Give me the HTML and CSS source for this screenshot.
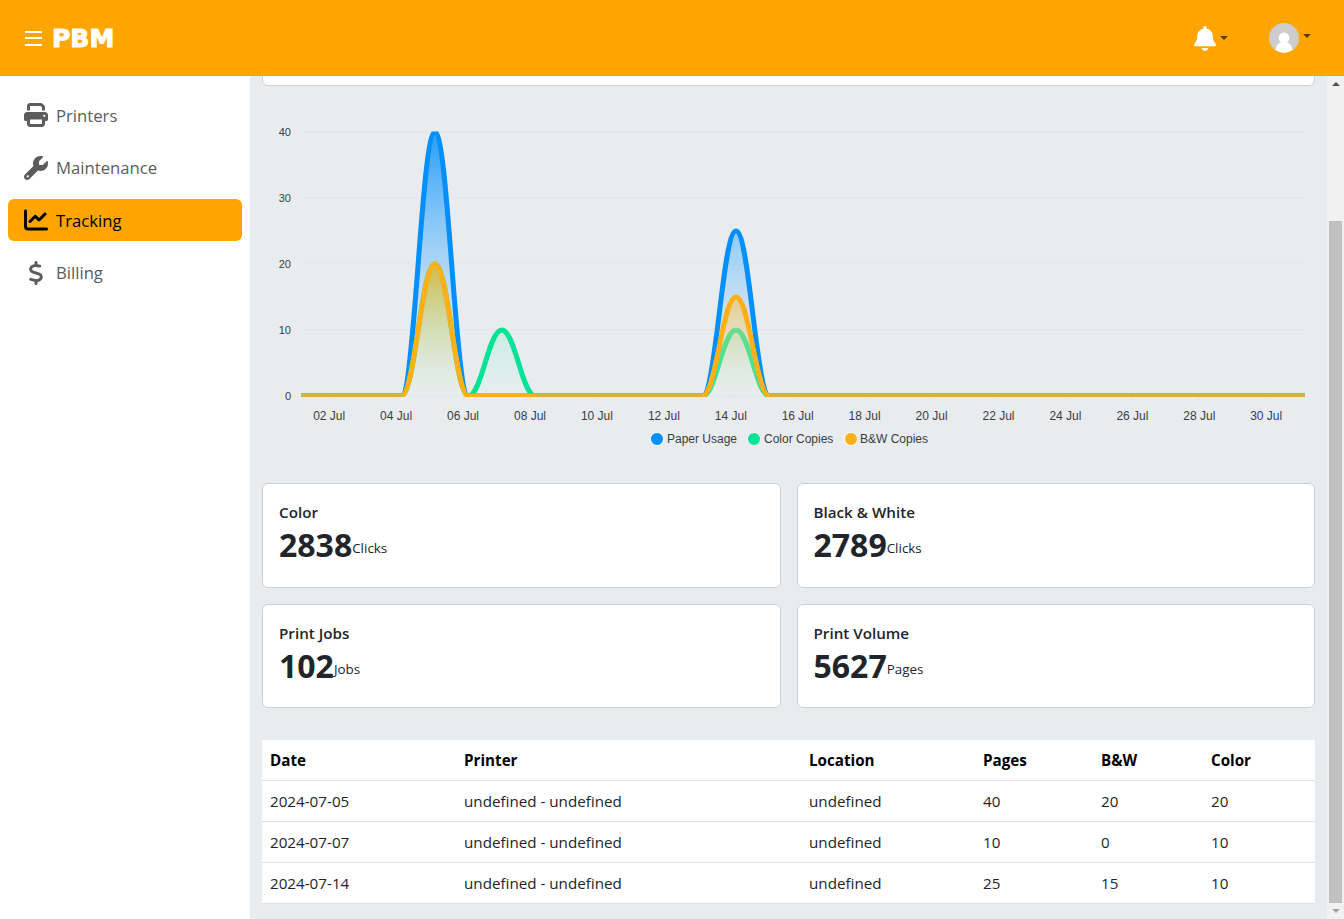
FILE: index.html
```html
<!DOCTYPE html>
<html>
  <head>
    <title>PBM Tracking</title>
    <link rel="stylesheet" href="styles.css">
  </head>
  <body>
    <header class="topbar">
      <div class="burger"><span></span><span></span><span></span></div>
      <div class="logo">PBM</div>
      <div class="bell-menu">
        <svg class="bell" viewBox="0 0 448 512"><path d="M224 0c-17.7 0-32 14.3-32 32V51.2C119 66 64 130.6 64 208v18.8c0 47-17.3 92.4-48.5 127.6l-7.4 8.3c-8.4 9.4-10.4 22.9-5.3 34.4S19.4 416 32 416H416c12.6 0 24-7.4 29.2-18.9s3.1-25-5.3-34.4l-7.4-8.3C401.3 319.2 384 273.9 384 226.8V208c0-77.4-55-142-128-156.8V32c0-17.7-14.3-32-32-32zm45.3 493.3c12-12 18.7-28.3 18.7-45.3H224 160c0 17 6.7 33.3 18.7 45.3s28.3 18.7 45.3 18.7s33.3-6.7 45.3-18.7z"/></svg>
        <span class="caret"></span>
      </div>
      <div class="user-menu">
        <svg class="avatar" viewBox="0 0 30 30">
          <circle cx="15" cy="15" r="15" fill="#cdcdcd"/>
          <circle cx="15" cy="15" r="5.4" fill="#fff"/>
          <path d="M6.5 27c.6-5.600 4-8 8.500-8s7.900 2.400 8.500 8a15 15 0 0 1-17 0z" fill="#fff"/>
        </svg>
        <span class="caret caret-user"></span>
      </div>
    </header>

    <div class="layout">
      <nav class="sidebar">
        <a class="nav-item">
          <svg class="nav-icon" viewBox="0 0 512 512"><path d="M128 0C92.7 0 64 28.7 64 64v96h64V64H354.7L384 93.3V160h64V93.3c0-17-6.7-33.3-18.7-45.3L400 18.7C388 6.7 371.7 0 354.7 0H128zM384 352v32 64H128V384 368 352H384zm64 32h32c17.7 0 32-14.3 32-32V256c0-35.3-28.7-64-64-64H64c-35.3 0-64 28.7-64 64v96c0 17.700 14.300 32 32 32H64v64c0 35.300 28.700 64 64 64H384c35.300 0 64-28.700 64-64V384zM432 248a24 24 0 1 1 0 48 24 24 0 1 1 0-48z"/></svg>
          Printers
        </a>
        <a class="nav-item">
          <svg class="nav-icon" viewBox="0 0 512 512"><path d="M352 320c88.400 0 160-71.600 160-160c0-15.300-2.200-30.100-6.200-44.200c-3.100-10.800-16.400-13.200-24.300-5.300l-76.800 76.800c-3 3-7.100 4.700-11.300 4.700H336c-8.800 0-16-7.200-16-16V118.600c0-4.200 1.700-8.300 4.700-11.300l76.800-76.800c7.900-7.900 5.400-21.200-5.300-24.300C382.100 2.200 367.300 0 352 0C263.600 0 192 71.600 192 160c0 19.100 3.400 37.500 9.500 54.500L19.900 396.100C7.200 408.800 0 426.100 0 444.100C0 481.600 30.400 512 67.900 512c18 0 35.300-7.200 48-19.900L297.500 310.500c17 6.200 35.400 9.500 54.500 9.500zM80 408a24 24 0 1 1 0 48 24 24 0 1 1 0-48z"/></svg>
          Maintenance
        </a>
        <a class="nav-item active">
          <svg class="nav-icon" viewBox="0 0 512 512"><path d="M64 64c0-17.700-14.300-32-32-32S0 46.300 0 64V400c0 44.200 35.800 80 80 80H480c17.700 0 32-14.300 32-32s-14.300-32-32-32H80c-8.800 0-16-7.200-16-16V64zm406.600 86.600c12.500-12.500 12.500-32.800 0-45.300s-32.800-12.500-45.300 0L320 210.700l-57.400-57.400c-12.500-12.500-32.800-12.500-45.300 0l-112 112c-12.500 12.500-12.500 32.800 0 45.300s32.800 12.500 45.300 0L240 221.300l57.400 57.400c12.500 12.500 32.800 12.500 45.300 0l128-128z"/></svg>
          Tracking
        </a>
        <a class="nav-item">
          <svg class="nav-icon" viewBox="0 0 320 512"><path d="M160 0c17.700 0 32 14.300 32 32V67.700c1.600 .2 3.100 .4 4.700 .7c.4 .1 .7 .1 1.100 .2l48 8.800c17.400 3.200 28.900 19.900 25.700 37.200s-19.900 28.900-37.200 25.700l-47.500-8.700c-31.300-4.600-58.900-1.500-78.300 6.200s-27.200 18.300-29 28.100c-2 10.700-.5 16.700 1.200 20.400c1.800 3.900 5.500 8.300 12.800 13.200c16.300 10.700 41.300 17.700 73.700 26.300l2.900 .8c28.600 7.600 63.600 16.800 89.600 33.800c14.200 9.300 27.600 21.900 35.900 39.500c8.500 17.900 10.300 37.900 6.400 59.200c-6.900 38-33.100 63.400-65.600 76.700c-13.700 5.600-28.600 9.200-44.400 11V480c0 17.700-14.300 32-32 32s-32-14.300-32-32V445.100c-.4-.1-.9-.1-1.300-.2l-.2 0 0 0c-24.400-3.800-64.500-14.300-91.500-26.300c-16.100-7.200-23.400-26.100-16.200-42.200s26.100-23.400 42.200-16.200c20.900 9.300 55.300 18.500 75.200 21.600c31.900 4.700 58.200 2 76-5.300c16.900-6.900 24.600-16.900 26.800-28.900c1.900-10.600 .4-16.700-1.300-20.400c-1.900-4-5.600-8.400-13-13.300c-16.400-10.700-41.500-17.700-74-26.300l-2.800-.7 0 0C119.400 279.300 84.400 270 58.400 253c-14.200-9.300-27.500-22-35.800-39.600c-8.400-17.900-10.100-37.900-6.100-59.200C23.700 116 52.300 91.200 84.800 78.300c13.300-5.300 27.900-8.900 43.200-11V32c0-17.700 14.300-32 32-32z"/></svg>
          Billing
        </a>
      </nav>

      <main class="content">
        <div class="card filter-card"></div>

        <svg class="chart" viewBox="262 85 1053 375">
          <defs>
            <linearGradient id="fill-blue" gradientUnits="userSpaceOnUse" x1="0" y1="132" x2="0" y2="396">
              <stop offset="0" stop-color="#008ffb" stop-opacity=".85"/>
              <stop offset="1" stop-color="#cfe9fe" stop-opacity=".1"/>
            </linearGradient>
            <linearGradient id="fill-green" gradientUnits="userSpaceOnUse" x1="0" y1="264" x2="0" y2="396">
              <stop offset="0" stop-color="#00e396" stop-opacity=".45"/>
              <stop offset="1" stop-color="#ccf9ea" stop-opacity=".1"/>
            </linearGradient>
            <linearGradient id="fill-orange" gradientUnits="userSpaceOnUse" x1="0" y1="264" x2="0" y2="396">
              <stop offset="0" stop-color="#feb019" stop-opacity=".75"/>
              <stop offset="1" stop-color="#ffefd1" stop-opacity=".1"/>
            </linearGradient>
            <clipPath id="plot-clip"><rect x="296" y="131.500" width="1012" height="265.500"/></clipPath>
          </defs>

          <g class="grid">
            <path d="M301 132H1305M301 198H1305M301 264H1305M301 330H1305M301 396H1305"/>
            <path d="M329.200 396v6M396.100 396v6M463 396v6M530 396v6M596.900 396v6M663.900 396v6M730.800 396v6M797.700 396v6M864.600 396v6M931.600 396v6M998.500 396v6M1065.400 396v6M1132.400 396v6M1199.300 396v6M1266.200 396v6"/>
          </g>

          <g clip-path="url(#plot-clip)">
            <path fill="url(#fill-blue)" d="M401.400 396C414.800 396 421.500 132 434.900 132C448.300 132 455 396 468.400 396ZM702.500 396C715.900 396 722.600 231 736 231C749.400 231 756.100 396 769.500 396Z"/>
            <path class="line" stroke="#008ffb" d="M301 396H401.400C414.800 396 421.500 132 434.900 132C448.300 132 455 396 468.400 396H702.500C715.900 396 722.600 231 736 231C749.400 231 756.100 396 769.500 396H1305"/>
            <path fill="url(#fill-green)" d="M401.400 396C414.800 396 421.500 264 434.900 264C448.300 264 455 396 468.400 396C481.800 396 488.400 330 501.800 330C515.200 330 521.900 396 535.300 396ZM702.500 396C715.900 396 722.600 330 736 330C749.400 330 756.100 396 769.500 396Z"/>
            <path class="line" stroke="#00e396" d="M301 396H401.400C414.800 396 421.500 264 434.900 264C448.300 264 455 396 468.400 396C481.800 396 488.400 330 501.800 330C515.200 330 521.900 396 535.300 396H702.500C715.900 396 722.600 330 736 330C749.400 330 756.100 396 769.500 396H1305"/>
            <path fill="url(#fill-orange)" d="M401.400 396C414.800 396 421.500 264 434.900 264C448.300 264 455 396 468.400 396ZM702.500 396C715.900 396 722.600 297 736 297C749.400 297 756.100 396 769.500 396Z"/>
            <path class="line" stroke="#feb019" d="M301 396H401.400C414.800 396 421.500 264 434.900 264C448.300 264 455 396 468.400 396H702.500C715.900 396 722.600 297 736 297C749.400 297 756.100 396 769.500 396H1305"/>
            <path class="baseline-tint" d="M301 396H401M535 396H702M770 396H1305"/>
          </g>

          <g class="y-labels">
            <text x="291" y="136">40</text>
            <text x="291" y="202">30</text>
            <text x="291" y="268">20</text>
            <text x="291" y="334">10</text>
            <text x="291" y="400">0</text>
          </g>

          <g class="x-labels">
            <text x="329.200" y="420">02 Jul</text>
            <text x="396.100" y="420">04 Jul</text>
            <text x="463" y="420">06 Jul</text>
            <text x="530" y="420">08 Jul</text>
            <text x="596.900" y="420">10 Jul</text>
            <text x="663.900" y="420">12 Jul</text>
            <text x="730.800" y="420">14 Jul</text>
            <text x="797.700" y="420">16 Jul</text>
            <text x="864.600" y="420">18 Jul</text>
            <text x="931.600" y="420">20 Jul</text>
            <text x="998.500" y="420">22 Jul</text>
            <text x="1065.400" y="420">24 Jul</text>
            <text x="1132.400" y="420">26 Jul</text>
            <text x="1199.300" y="420">28 Jul</text>
            <text x="1266.200" y="420">30 Jul</text>
          </g>

          <g class="legend">
            <circle cx="657" cy="439" r="6.500" fill="#008ffb"/>
            <text x="667" y="443">Paper Usage</text>
            <circle cx="754" cy="439" r="6.500" fill="#00e396"/>
            <text x="764" y="443">Color Copies</text>
            <circle cx="851" cy="439" r="6.500" fill="#feb019"/>
            <text x="860" y="443">B&amp;W Copies</text>
          </g>
        </svg>

        <section class="stats">
          <div class="card stat">
            <div class="stat-title">Color</div>
            <div class="stat-row"><span class="stat-value">2838</span><span class="stat-unit">Clicks</span></div>
          </div>
          <div class="card stat">
            <div class="stat-title">Black &amp; White</div>
            <div class="stat-row"><span class="stat-value">2789</span><span class="stat-unit">Clicks</span></div>
          </div>
          <div class="card stat">
            <div class="stat-title">Print Jobs</div>
            <div class="stat-row"><span class="stat-value">102</span><span class="stat-unit">Jobs</span></div>
          </div>
          <div class="card stat">
            <div class="stat-title">Print Volume</div>
            <div class="stat-row"><span class="stat-value">5627</span><span class="stat-unit">Pages</span></div>
          </div>
        </section>

        <table class="jobs">
          <thead>
            <tr>
              <th class="col-date">Date</th>
              <th class="col-printer">Printer</th>
              <th class="col-location">Location</th>
              <th class="col-pages">Pages</th>
              <th class="col-bw">B&amp;W</th>
              <th>Color</th>
            </tr>
          </thead>
          <tbody>
            <tr><td>2024-07-05</td><td>undefined - undefined</td><td>undefined</td><td>40</td><td>20</td><td>20</td></tr>
            <tr><td>2024-07-07</td><td>undefined - undefined</td><td>undefined</td><td>10</td><td>0</td><td>10</td></tr>
            <tr><td>2024-07-14</td><td>undefined - undefined</td><td>undefined</td><td>25</td><td>15</td><td>10</td></tr>
          </tbody>
        </table>
      </main>

      <div class="scrollbar">
        <span class="arrow arrow-up"></span>
        <div class="track"><div class="thumb"></div></div>
        <span class="arrow arrow-down"></span>
      </div>
    </div>
  </body>
</html>
```

FILE: styles.css
```css
/* Basic styling */
* { box-sizing: border-box; }
html, body { height: 100%; }
body { margin: 0; overflow: hidden; font-family: "Open Sans", "Noto Sans", sans-serif; font-size: 15.2px; color: #212529; background: #e9ecef; }

/* Top bar */
.topbar { display: flex; align-items: center; height: 76px; padding-left: 25px; background: #ffa500; }
.burger { display: flex; flex-direction: column; gap: 4.500px; width: 17px; margin-right: 10px; }
.burger span { height: 2px; background: #fff; }
.logo { font-family: "DejaVu Sans", sans-serif; font-size: 25px; font-weight: 700; line-height: 1; color: #fff; -webkit-text-stroke: 1px #fff; }
.bell-menu { display: flex; align-items: center; margin-left: auto; }
.bell { width: 22px; height: 25px; fill: #fff; }
.caret { width: 0; height: 0; margin-left: 4px; border-top: 4px solid #5e3d00; border-left: 4px solid transparent; border-right: 4px solid transparent; }
.user-menu { display: flex; align-items: flex-start; margin: 0 33px 0 41px; }
.avatar { width: 30px; height: 30px; }
.caret-user { margin-top: 11px; }

.layout { display: flex; height: 843px; }

/* Sidebar */
.sidebar { display: flex; flex-direction: column; gap: 10.500px; width: 250px; padding: 17.500px 8px 0; background: #fff; }
.nav-item { display: flex; align-items: center; gap: 8px; height: 42px; padding: 1px 16px 0; border-radius: 6px; font-size: 16.700px; color: #5c5c5c; }
.nav-item.active { background: #ffa500; color: #000; }
.nav-icon { flex: none; width: 24px; height: 24px; fill: currentColor; }

/* Main column */
.content { flex: 1; min-width: 0; overflow: hidden; padding: 0 12px; }
.card { background: #fff; border: 1px solid #ced1d4; border-radius: 6px; }
.filter-card { height: 30px; margin-top: -20px; }
.chart { display: block; width: 1053px; height: 375px; margin: -1px 0 23px; }

/* Chart parts */
.grid path { fill: none; stroke: #e3e3e5; stroke-width: 1; }
.line { fill: none; stroke-width: 5; }
.baseline-tint { fill: none; stroke: #5fbf9a; stroke-width: 5; opacity: .3; }
.chart text { font-family: "Liberation Sans", Arial, sans-serif; font-size: 12px; fill: #373d3f; }
.y-labels text { font-size: 11px; text-anchor: end; }
.x-labels text { text-anchor: middle; }
.legend circle { stroke: #fff; stroke-width: 1; }

/* Stat cards */
.stats { display: grid; grid-template-columns: 1fr 1fr; gap: 16px; }
.stat { height: 104.500px; padding: 16px; }
.stat-title { font-size: 15.200px; font-weight: 600; line-height: 24px; }
.stat-row { display: flex; align-items: center; }
.stat-value { font-size: 32px; font-weight: 700; line-height: 42px; }
.stat-unit { margin-top: 6px; font-size: 13.400px; }

/* Table */
.jobs { width: 100%; margin-top: 32px; border-collapse: collapse; table-layout: fixed; background: #fff; }
.jobs th, .jobs td { height: 41px; padding: 0 8px; border-bottom: 1px solid #dee2e6; text-align: left; }
.jobs th { height: 40px; font-weight: 700; color: #000; }
.col-date { width: 194px; }
.col-printer { width: 345px; }
.col-location { width: 174px; }
.col-pages { width: 118px; }
.col-bw { width: 110px; }

/* Scrollbar */
.scrollbar { display: flex; flex-direction: column; flex: none; width: 17px; background: #f1f1f1; }
.arrow { flex: none; width: 0; height: 0; margin: 6px auto; border-left: 4px solid transparent; border-right: 4px solid transparent; }
.arrow-up { border-bottom: 4px solid #505050; }
.arrow-down { border-top: 4px solid #a3a3a3; }
.track { flex: 1; padding: 129px 2px 0; }
.thumb { height: 100%; background: #c1c1c1; }
```
